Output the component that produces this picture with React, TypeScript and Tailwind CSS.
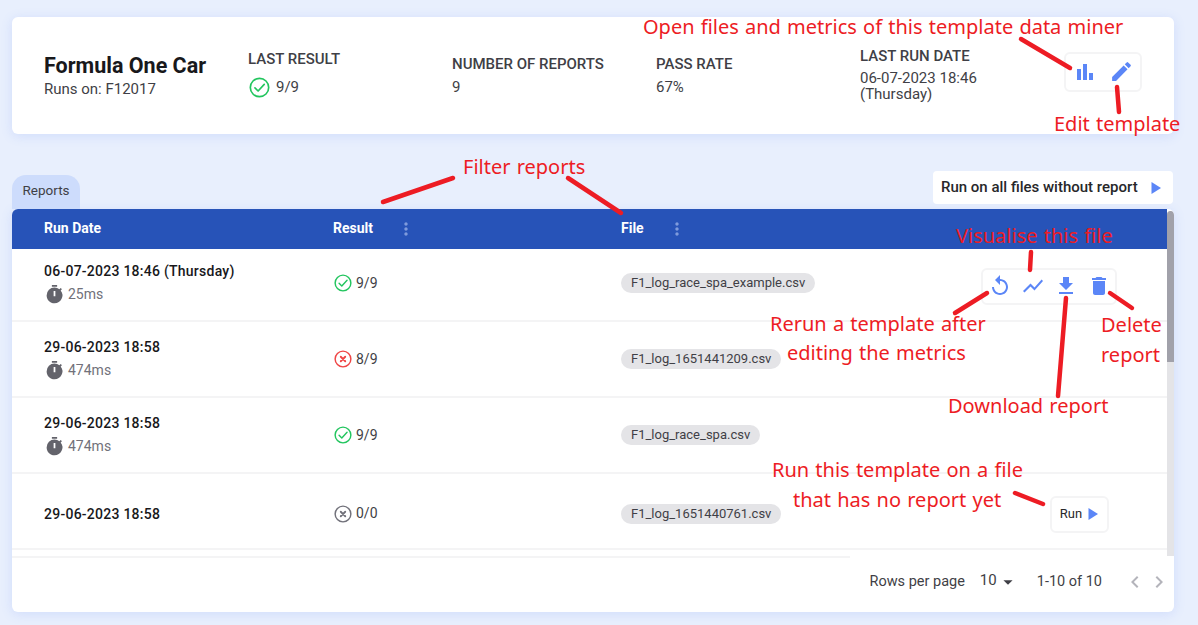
import React from 'react';
import {
  MdBarChart,
  MdEdit,
  MdReplay,
  MdShowChart,
  MdFileDownload,
  MdDelete,
  MdTimer,
  MdArrowDropDown,
  MdChevronLeft,
  MdChevronRight,
  MdMoreVert,
} from 'react-icons/md';

type Status = 'pass' | 'fail' | 'none';

const StatusIcon = ({ status, size }: { status: Status; size: number }) => {
  const color = status === 'pass' ? '#22c55e' : status === 'fail' ? '#ef4444' : '#71717a';
  return (
    <svg width={size} height={size} viewBox="0 0 24 24" fill="none" className="shrink-0">
      <circle cx="12" cy="12" r="10.5" stroke={color} strokeWidth="1.9" />
      {status === 'pass' ? (
        <path d="M6.8 12.4l3.6 3.6 7-7.6" stroke={color} strokeWidth="1.9" strokeLinecap="round" strokeLinejoin="round" />
      ) : (
        <path d="M9 9l6 6M15 9l-6 6" stroke={color} strokeWidth="2.4" strokeLinecap="round" />
      )}
    </svg>
  );
};

const Play = ({ size }: { size: number }) => (
  <svg width={size} height={size} viewBox="0 0 12 12" className="shrink-0">
    <polygon points="1.5,0 11,6 1.5,12" fill="#5b86f7" />
  </svg>
);

const Stat = ({ label, children, className }: { label: string; children: React.ReactNode; className?: string }) => (
  <div className={className}>
    <div className="text-[15px] leading-[20px] font-medium text-[#3f3f46]">{label}</div>
    {children}
  </div>
);

const rows = [
  { date: '06-07-2023 18:46 (Thursday)', time: '25ms', status: 'pass' as Status, score: '9/9', file: 'F1_log_race_spa_example.csv', height: 'h-[73px]', kind: 'actions' },
  { date: '29-06-2023 18:58', time: '474ms', status: 'fail' as Status, score: '8/9', file: 'F1_log_1651441209.csv', height: 'h-[76px]', kind: '' },
  { date: '29-06-2023 18:58', time: '474ms', status: 'pass' as Status, score: '9/9', file: 'F1_log_race_spa.csv', height: 'h-[76px]', kind: '' },
  { date: '29-06-2023 18:58', time: '', status: 'none' as Status, score: '0/0', file: 'F1_log_1651440761.csv', height: 'h-[76px]', kind: 'run' },
];

// red notes drawn on top of the screenshot
const notes = [
  { text: 'Open files and metrics of this template data miner', x: 643, y: 27 },
  { text: 'Filter reports', x: 463, y: 167 },
  { text: 'Edit template', x: 1054, y: 124 },
  { text: 'Visualise this file', x: 956, y: 236 },
  { text: 'Rerun a template after', x: 770, y: 324 },
  { text: 'editing the metrics', x: 787, y: 353 },
  { text: 'Delete', x: 1101, y: 325 },
  { text: 'report', x: 1101, y: 355 },
  { text: 'Download report', x: 948, y: 406 },
  { text: 'Run this template on a file', x: 772, y: 470 },
  { text: 'that has no report yet', x: 793, y: 500 },
];

const strokes = [
  'M383 202L453 178',
  'M568 178L621 213',
  'M1021 39L1070 68',
  'M1117 87L1119 112',
  'M1031 252L1030 270',
  'M987 293L955 313',
  'M1066 298L1058 396',
  'M1110 293L1132 308',
  'M1015 493L1043 504',
];

const App = () => {
  return (
    <div className="relative h-[625px] w-[1198px] overflow-hidden bg-[#e8effd] pt-[17px] pr-[24px] pl-3 font-['Roboto',sans-serif] text-[#27272a]">
      {/* Template summary */}
      <div className="grid h-[117px] grid-cols-[204px_204px_204px_204px_204px_1fr] items-center rounded-md bg-white pl-8 shadow-[0_2px_12px_rgba(90,125,240,0.16)]">
        <div>
          <h1 className="text-[21.5px] leading-[26px] font-bold text-[#18181b]">Formula One Car</h1>
          <p className="text-[15px] leading-[20px] text-[#3f3f46]">Runs on: F12017</p>
        </div>
        <Stat label="LAST RESULT" className="-mt-[4px]">
          <div className="mt-[7px] flex items-center gap-[6px] text-[15px] leading-[22px] text-[#3f3f46]">
            <span className="ml-[1px]"><StatusIcon status="pass" size={21} /></span>
            9/9
          </div>
        </Stat>
        <Stat label="NUMBER OF REPORTS">
          <div className="mt-[3px] text-[15px] leading-[20px] text-[#3f3f46]">9</div>
        </Stat>
        <Stat label="PASS RATE">
          <div className="mt-[3px] text-[15px] leading-[20px] text-[#3f3f46]">67%</div>
        </Stat>
        <Stat label="LAST RUN DATE" className="-mt-[3px]">
          <div className="mt-[4px] w-[130px] text-[15px] leading-[16px] text-[#3f3f46]">06-07-2023 18:46 (Thursday)</div>
        </Stat>
        <div className="-mt-[8px] flex h-[40px] w-[78px] items-center justify-center gap-[12px] rounded-md border-2 border-[#f4f4f5]">
          <MdBarChart className="text-[#5b86f7]" size={24} />
          <MdEdit className="text-[#5b86f7]" size={25} />
        </div>
      </div>

      {/* Tab + bulk run */}
      <div className="mt-[37px] flex h-[38px] items-end justify-between">
        <div className="flex h-[34px] w-[68px] items-center justify-center rounded-t-[14px] bg-[#cddcfc] pb-[4px] text-[13.5px] text-[#3f3f46]">Reports</div>
        <button className="mr-[1px] mb-[5px] flex h-[33px] w-[240px] items-center justify-between rounded-[4px] bg-white pr-[11px] pl-[8px] text-[15px] font-medium text-[#27272a]">
          Run on all files without report
          <Play size={12} />
        </button>
      </div>

      {/* Reports table */}
      <div className="h-[403px] overflow-hidden rounded-md bg-white shadow-[0_2px_12px_rgba(90,125,240,0.16)]">
        <div className="flex h-[347px]">
          <div className="min-w-0 flex-1">
            <div className="grid h-[40px] grid-cols-[321px_288px_1fr] items-center bg-[#2753b8] pb-[1px] text-[14px] font-bold text-white">
              <div className="pl-8">Run Date</div>
              <div className="flex items-center">
                <span className="w-[63px]">Result</span>
                <MdMoreVert className="text-[#7f9bdc]" size={20} />
              </div>
              <div className="flex items-center">
                <span className="w-[46px]">File</span>
                <MdMoreVert className="text-[#7f9bdc]" size={20} />
              </div>
            </div>
            <div className="h-[307px] overflow-hidden">
              {rows.map((r, i) => (
                <div key={r.file} className={`grid ${r.height} grid-cols-[321px_288px_1fr] items-center border-b-2 border-[#f4f4f5]`}>
                  <div className={`pl-8 ${r.time ? (i === 0 ? '-mt-[3px]' : '') : 'pt-[6px]'}`}>
                    <div className="text-[14px] leading-[18px] font-medium tracking-[0.25px] text-[#18181b]">{r.date}</div>
                    {r.time && (
                      <div className="mt-[4px] flex items-center gap-[3px] text-[14px] leading-[20px] text-[#71717a]">
                        <MdTimer className="text-[#63636b]" size={21} />
                        {r.time}
                      </div>
                    )}
                  </div>
                  <div className={`flex items-center gap-[4px] pl-[1px] text-[14px] text-[#3f3f46] ${r.time ? (i === 0 ? '-mt-[3px]' : '') : 'pt-[5px]'}`}>
                    <StatusIcon status={r.status} size={18} />
                    {r.score}
                  </div>
                  <div className="flex items-center justify-between">
                    <span className={`rounded-full bg-[#e4e4e7] px-[10px] text-[13px] leading-[20px] text-[#3f3f46] ${r.time ? (i === 0 ? '-mt-[3px]' : '') : 'mt-[5px]'}`}>{r.file}</span>
                    {r.kind === 'actions' && (
                      <div className="mt-[3px] mr-[50px] flex h-[37px] w-[136px] items-center justify-center gap-[9px] rounded-md border-2 border-[#f4f4f5] text-[#5b86f7]">
                        <MdReplay size={24} />
                        <MdShowChart size={24} />
                        <MdFileDownload size={24} />
                        <MdDelete size={24} />
                      </div>
                    )}
                    {r.kind === 'run' && (
                      <div className="mt-[6px] mr-[58px] flex h-[37px] w-[59px] items-center justify-center gap-[5px] rounded-md border-2 border-[#f4f4f5] text-[13px] text-[#27272a]">
                        Run
                        <Play size={12} />
                      </div>
                    )}
                  </div>
                </div>
              ))}
            </div>
          </div>
          <div className="mt-[2px] w-[7px] rounded-t bg-[#e4e4e7]">
            <div className="h-[151px] rounded-t bg-[#a1a1aa]" />
          </div>
        </div>
        <div className="h-[2px] w-[838px] bg-[#f4f4f5]" />
        <div className="flex h-[54px] items-center justify-end pr-[3px] pb-[7px] text-[14.5px] text-[#3f3f46]">
          <span>Rows per page</span>
          <span className="ml-[15px] -mt-[2px] text-[15px]">10</span>
          <MdArrowDropDown className="text-[#3f3f46]" size={22} />
          <span className="ml-[18px]">1-10 of 10</span>
          <MdChevronLeft className="ml-[21px] text-[#b4b4bb]" size={24} />
          <MdChevronRight className="text-[#b4b4bb]" size={24} />
        </div>
      </div>

      {/* Annotations */}
      <svg className="pointer-events-none absolute top-0 left-0" width="1198" height="625" fill="none">
        {strokes.map((d) => (
          <path key={d} d={d} stroke="#ed1c24" strokeWidth="4.5" strokeLinecap="round" />
        ))}
      </svg>
      {notes.map((n) => (
        <div
          key={n.text}
          className="absolute font-['Noto_Sans',sans-serif] text-[20px] leading-[28px] whitespace-nowrap text-[#ed1c24] [word-spacing:1px]"
          style={{ left: n.x, top: n.y - 14 }}
        >
          {n.text}
        </div>
      ))}
    </div>
  );
};

export default App;
